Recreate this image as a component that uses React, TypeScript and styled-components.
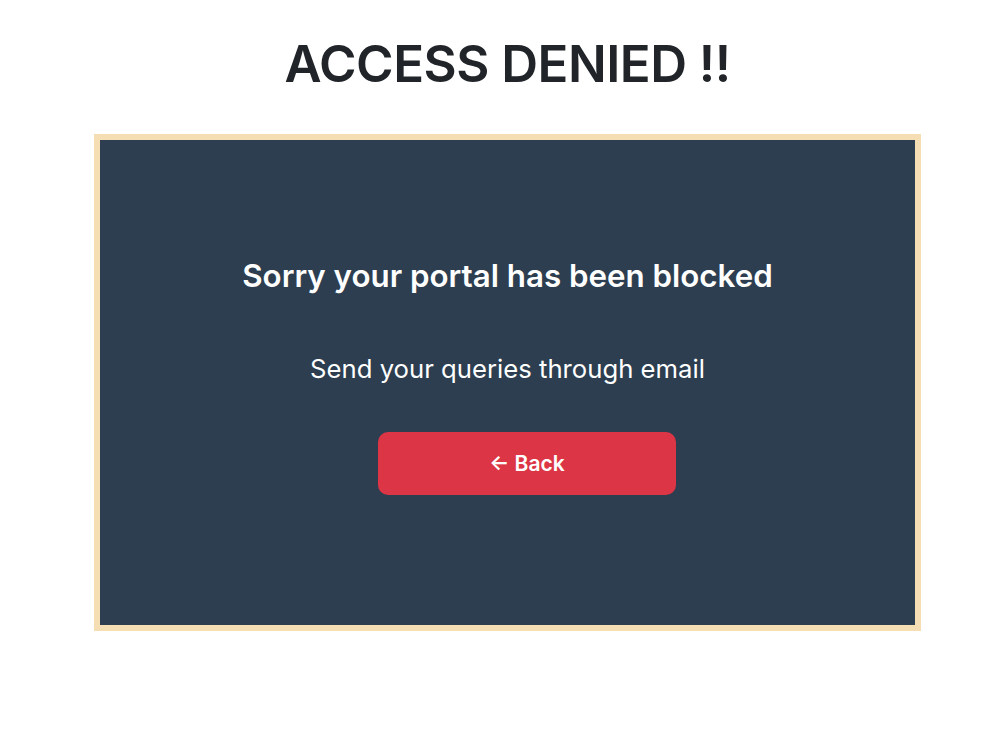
import React from "react";
import styled, { createGlobalStyle } from "styled-components";

const GlobalStyle = createGlobalStyle`
  html, body {
    margin: 0;
    padding: 0;
    background: #ffffff;
  }
  body {
    font-family: Inter, "Noto Sans", "Liberation Sans", sans-serif;
    color: #212529;
  }
`;

const Page = styled.main`
  display: flex;
  flex-direction: column;
  align-items: center;
  padding: 34px 0 0 15px;
`;

const Title = styled.h1`
  margin: 0 0 40px;
  font-size: 51px;
  line-height: 60px;
  font-weight: 600;
  letter-spacing: -0.5px;
  color: #212529;
`;

const Panel = styled.section`
  box-sizing: border-box;
  width: 827px;
  height: 497px;
  border: 6px solid #f5deb3;
  background: #2c3e50;
  display: flex;
  flex-direction: column;
  align-items: center;
  padding-top: 116px;
`;

const Heading = styled.h2`
  margin: 0;
  font-size: 31.3px;
  line-height: 40px;
  font-weight: 600;
  color: #ffffff;
`;

const Message = styled.p`
  margin: 57px 0 0;
  font-size: 25.7px;
  line-height: 32px;
  font-weight: 400;
  color: #ffffff;
`;

const BackButton = styled.button`
  margin: 47px 0 0 39px;
  width: 298px;
  height: 63px;
  border: none;
  border-radius: 10px;
  background: #dc3545;
  color: #ffffff;
  font-family: inherit;
  font-size: 21px;
  font-weight: 600;
  cursor: pointer;
`;

export default function App() {
  return (
    <>
      <GlobalStyle />
      <Page>
        <Title>ACCESS DENIED !!</Title>
        <Panel>
          <Heading>Sorry your portal has been blocked</Heading>
          <Message>Send your queries through email</Message>
          <BackButton type="button">← Back</BackButton>
        </Panel>
      </Page>
    </>
  );
}
